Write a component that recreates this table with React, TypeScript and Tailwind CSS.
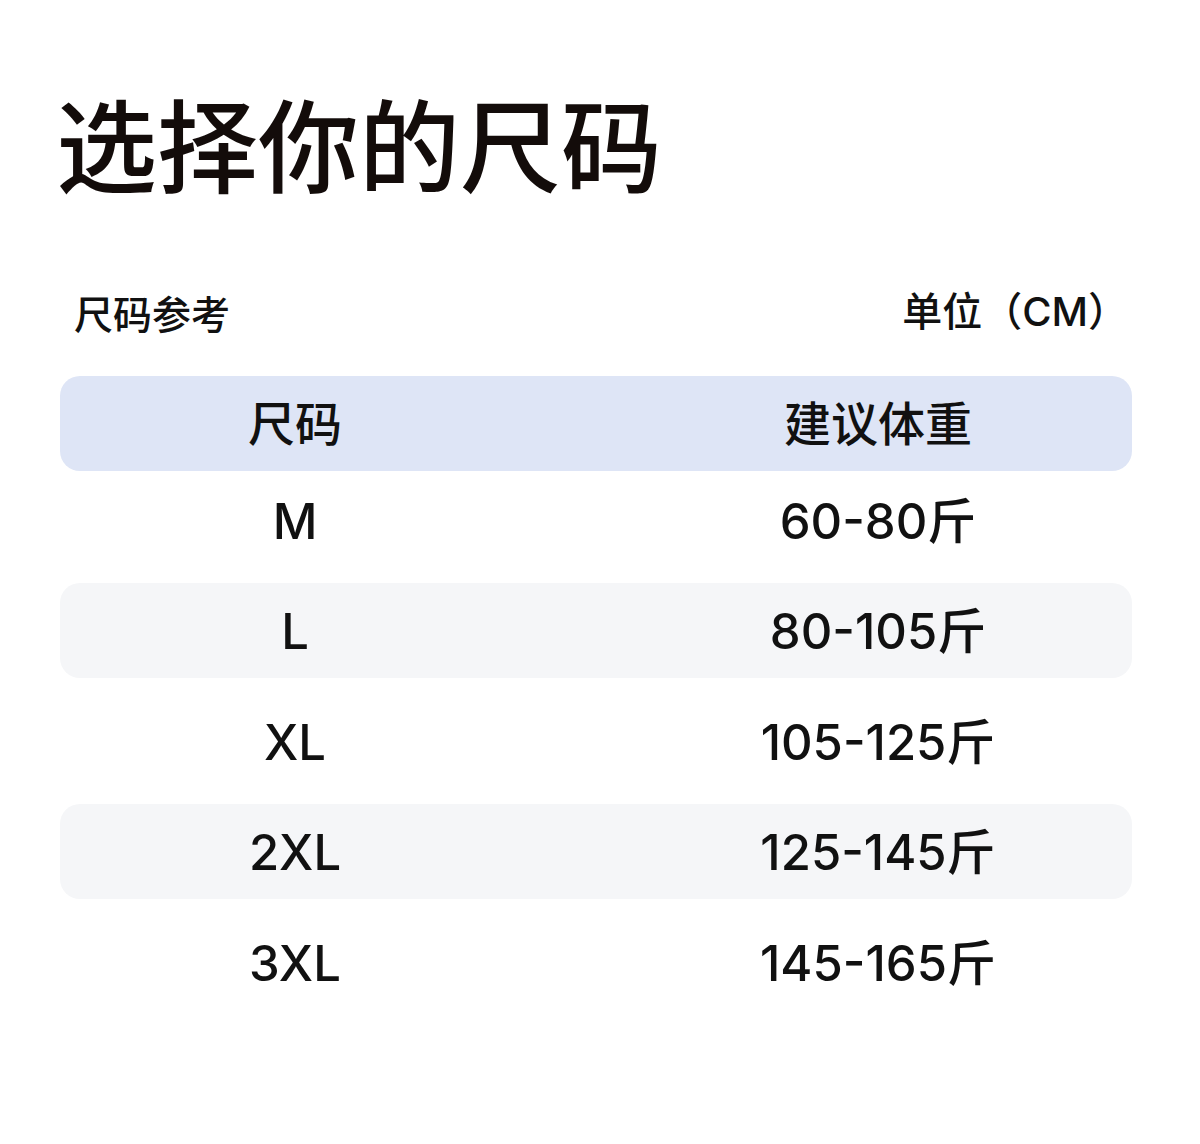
import React from "react";

const rows = [
  { size: "M", weight: "60-80斤", striped: false },
  { size: "L", weight: "80-105斤", striped: true },
  { size: "XL", weight: "105-125斤", striped: false },
  { size: "2XL", weight: "125-145斤", striped: true },
  { size: "3XL", weight: "145-165斤", striped: false },
];

const font = { fontFamily: 'Inter, "Noto Sans CJK SC", sans-serif' };

export default function App() {
  return (
    <div className="w-[1200px] h-[1144px] bg-white text-black" style={font}>
      <h1
        className="pt-[91px] pl-[56px] text-[101px] leading-[101px] font-medium text-[#130c0a]"
        style={{ fontFamily: '"Noto Sans CJK SC", sans-serif' }}
      >
        选择你的尺码
      </h1>
      <div className="mt-[100px] flex items-center justify-between pl-[74px] pr-[72px] text-[39px] leading-[40px] font-medium text-[#111]">
        <span style={{ fontFamily: '"Noto Sans CJK SC", sans-serif' }}>尺码参考</span>
        <span className="text-[40px]">单位（CM）</span>
      </div>
      <div className="ml-[60px] w-[1072px] mt-[44px] flex flex-col">
        <div className="grid h-[95px] grid-cols-[470px_1fr] items-center rounded-[20px] bg-[#dee5f6] text-[47px] font-medium leading-none text-[#111]">
          <div className="text-center">尺码</div>
          <div className="pl-[94px] text-center">建议体重</div>
        </div>
        <div className="mt-px flex flex-col gap-[15.5px]">
          {rows.map((r) => (
            <div
              key={r.size}
              className={
                "grid h-[95px] grid-cols-[470px_1fr] items-center rounded-[20px] pt-[3px] text-[49px] font-medium leading-none text-[#111] " +
                (r.striped ? "bg-[#f5f6f8]" : "bg-white")
              }
            >
              <div className="text-center">{r.size}</div>
              <div className="pl-[94px] text-center">{r.weight}</div>
            </div>
          ))}
        </div>
      </div>
    </div>
  );
}
